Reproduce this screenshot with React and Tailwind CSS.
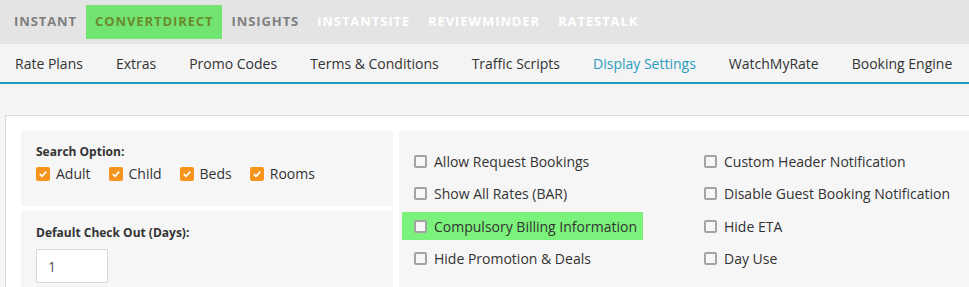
import React from "react";

const topNav = [
  { label: "INSTANT", tone: "gray" },
  { label: "CONVERTDIRECT", tone: "active" },
  { label: "INSIGHTS", tone: "gray" },
  { label: "INSTANTSITE", tone: "white" },
  { label: "REVIEWMINDER", tone: "white" },
  { label: "RATESTALK", tone: "white" },
];

const subNav = [
  "Rate Plans",
  "Extras",
  "Promo Codes",
  "Terms & Conditions",
  "Traffic Scripts",
  "Display Settings",
  "WatchMyRate",
  "Booking Engine",
];

const leftOptions = [
  "Allow Request Bookings",
  "Show All Rates (BAR)",
  "Compulsory Billing Information",
  "Hide Promotion & Deals",
];

const rightOptions = [
  "Custom Header Notification",
  "Disable Guest Booking Notification",
  "Hide ETA",
  "Day Use",
];

function OrangeCheck({ label }) {
  return (
    <label className="flex items-center gap-[6px]">
      <span className="w-[14px] h-[14px] rounded-[2px] bg-[#f7941d] flex items-center justify-center">
        <svg width="10" height="10" viewBox="0 0 10 10">
          <path d="M1.8 5.2 L4 7.3 L8.2 2.6" fill="none" stroke="#fff" strokeWidth="1.8" />
        </svg>
      </span>
      <span className="text-[14px] text-[#333]">{label}</span>
    </label>
  );
}

function Option({ label, highlight }) {
  return (
    <div className="h-[32.5px] flex items-center">
      <div
        className={
          highlight
            ? "h-[28px] flex items-center gap-[7px] pl-[12px] pr-[6px] -ml-[12px] bg-[#7bf27b]"
            : "h-[28px] flex items-center gap-[7px]"
        }
      >
        <span className="w-[13px] h-[13px] rounded-[2px] border-2 border-[#a3a3a3] bg-[#f7f7f7]" />
        <span className="text-[14px] text-[#333]">{label}</span>
      </div>
    </div>
  );
}

export default function App() {
  return (
    <div
      className="w-[969px] h-[287px] overflow-hidden bg-[#f5f5f5]"
      style={{ fontFamily: "'Open Sans', 'Noto Sans', sans-serif" }}
    >
      <div className="h-[44px] bg-[#e4e4e4] flex items-center pl-[5px]">
        {topNav.map((item) => (
          <div
            key={item.label}
            className={
              "h-[34px] px-[9px] flex items-center text-[13px] font-bold tracking-[0.07em] " +
              (item.tone === "active"
                ? "bg-[#72e472] text-[#6b8a2c]"
                : item.tone === "white"
                ? "text-white"
                : "text-[#7f7f7f]")
            }
          >
            {item.label}
          </div>
        ))}
      </div>

      <div className="h-[40px] bg-[#f4f4f4] border-b-2 border-[#1b9bb9] flex items-center pl-[15px] gap-[33px]">
        {subNav.map((item) => (
          <span
            key={item}
            className={
              "text-[14px] whitespace-nowrap " +
              (item === "Display Settings" ? "text-[#2a9cc0]" : "text-[#333]")
            }
          >
            {item}
          </span>
        ))}
      </div>

      <div className="pt-[31px] pl-[5px]">
        <div className="w-[1100px] bg-white border-t border-l border-[#d9d9d9] p-[15px] flex gap-[6px]">
          <div className="w-[372px] flex flex-col gap-[5px]">
            <div className="h-[75px] bg-[#f6f6f6] pl-[15px] pt-[13px]">
              <div className="text-[12px] font-bold text-[#333] leading-[16px]">
                Search Option:
              </div>
              <div className="flex items-center gap-[18px] mt-[3px]">
                <OrangeCheck label="Adult" />
                <OrangeCheck label="Child" />
                <OrangeCheck label="Beds" />
                <OrangeCheck label="Rooms" />
              </div>
            </div>
            <div className="h-[120px] bg-[#f6f6f6] pl-[15px] pt-[14px]">
              <div className="text-[12px] font-bold text-[#333] leading-[16px]">
                Default Check Out (Days):
              </div>
              <div className="mt-[8px] w-[72px] h-[34px] bg-white border border-[#d9d9d9] flex items-center pl-[11px] text-[14px] text-[#555]">
                1
              </div>
            </div>
          </div>

          <div className="flex-1 bg-[#f6f6f6] pl-[15px] pt-[14px] flex">
            <div className="w-[290px]">
              {leftOptions.map((o) => (
                <Option key={o} label={o} highlight={o === "Compulsory Billing Information"} />
              ))}
            </div>
            <div>
              {rightOptions.map((o) => (
                <Option key={o} label={o} />
              ))}
            </div>
          </div>
        </div>
      </div>
    </div>
  );
}
